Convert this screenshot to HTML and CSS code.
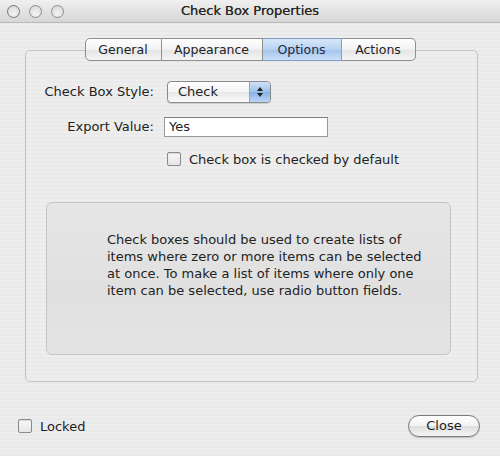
FILE: index.html
```html
<!DOCTYPE html>
<html>
<head>
<meta charset="utf-8">
<link rel="stylesheet" href="styles.css">
</head>
<body>
<div class="window">
  <div class="titlebar">
    <div class="lights">
      <span class="light"></span><span class="light"></span><span class="light"></span>
    </div>
    <div class="title">Check Box Properties</div>
  </div>
  <div class="content">
    <div class="tabbox">
      <div class="tabs">
        <div class="tab t-general">General</div>
        <div class="tab t-appearance">Appearance</div>
        <div class="tab t-options selected">Options</div>
        <div class="tab t-actions">Actions</div>
      </div>
      <div class="form">
        <div class="label">Check Box Style:</div>
        <div class="select">
          <span class="select-text">Check</span>
          <span class="select-arrows">
            <svg width="8" height="12" viewBox="0 0 8 12"><path d="M4 1 L7 5 L1 5 Z" fill="#222"/><path d="M4 11 L7 7 L1 7 Z" fill="#222"/></svg>
          </span>
        </div>
        <div class="label label2">Export Value:</div>
        <div class="input">Yes</div>
        <div></div>
        <div class="check-row"><span class="checkbox"></span><span>Check box is checked by default</span></div>
      </div>
      <div class="info">
        <p>Check boxes should be used to create lists of items where zero or more items can be selected at once. To make a list of items where only one item can be selected, use radio button fields.</p>
      </div>
    </div>
    <div class="bottom">
      <div class="check-row locked"><span class="checkbox"></span><span>Locked</span></div>
      <div class="button">Close</div>
    </div>
  </div>
</div>
</body>
</html>
```
FILE: styles.css
```css
html, body {
  margin: 0;
  padding: 0;
}
body {
  width: 500px;
  height: 456px;
  overflow: hidden;
  font-family: "DejaVu Sans", "Liberation Sans", sans-serif;
  font-size: 13px;
  color: #222;
  background: #ececec;
}
.window {
  width: 500px;
  height: 456px;
  background: repeating-linear-gradient(180deg, #ededed 0px, #ededed 2px, #e9e9e9 2px, #e9e9e9 4px);
  display: flex;
  flex-direction: column;
}
.titlebar {
  height: 22px;
  flex: none;
  background: linear-gradient(#f0f0f0, #d6d6d6);
  border-bottom: 1px solid #b9b9b9;
  display: flex;
  align-items: center;
  position: relative;
}
.lights {
  display: flex;
  gap: 9px;
  padding-left: 7px;
}
.light {
  width: 11px;
  height: 11px;
  border-radius: 50%;
  border: 1px solid #8d8d8d;
  background: radial-gradient(circle at 50% 70%, #f4f4f4, #d4d4d4);
  box-sizing: content-box;
}
.light:first-child {
  border-color: #777;
}
.title {
  position: absolute;
  left: 0;
  right: 0;
  top: 0;
  line-height: 22px;
  text-align: center;
  font-size: 13px;
  color: #2a2a2a;
  text-shadow: 0 0 0.4px #2a2a2a;
}
.content {
  flex: 1;
  padding: 27px 22px 0 25px;
  display: flex;
  flex-direction: column;
}
.tabbox {
  height: 330px;
  border: 1px solid #c2c2c2;
  border-radius: 5px;
  background: repeating-linear-gradient(180deg, #eeeeee 0px, #eeeeee 2px, #eaeaea 2px, #eaeaea 4px);
  display: flex;
  flex-direction: column;
}
.tabs {
  display: flex;
  justify-content: center;
  margin-top: -13px;
  margin-left: -3px;
}
.tab {
  height: 21px;
  line-height: 21px;
  text-align: center;
  border: 1px solid #8e8e8e;
  border-left: none;
  background: linear-gradient(#ffffff, #f2f2f2 50%, #e4e4e4 51%, #f4f4f4);
  color: #222;
  font-size: 12.5px;
}
.t-general {
  width: 75px;
  border-left: 1px solid #8e8e8e;
  border-radius: 5px 0 0 5px;
}
.t-appearance { width: 100px; }
.t-options { width: 78px; }
.t-actions {
  width: 73px;
  border-radius: 0 5px 5px 0;
}
.tab.selected {
  background: linear-gradient(#d8e7f8, #b7d2f2 50%, #a2c3ed 51%, #c9dff7);
  border-color: #7f9fc8;
  color: #1d2a44;
}
.form {
  display: grid;
  grid-template-columns: 128px auto;
  column-gap: 12px;
  align-items: center;
  margin-top: 20px;
}
.label {
  text-align: right;
  height: 22px;
  line-height: 22px;
}
.label2 {
  margin-top: 13px;
}
.select {
  width: 102px;
  height: 20px;
  margin-left: 1px;
  border: 1px solid #8a8a8a;
  border-radius: 4px;
  background: linear-gradient(#ffffff, #f4f4f4 50%, #e8e8e8 51%, #fafafa);
  display: flex;
  box-shadow: 0 1px 1px rgba(0,0,0,0.15);
  overflow: hidden;
}
.select-text {
  flex: 1;
  line-height: 20px;
  padding-left: 10px;
}
.select-arrows {
  width: 20px;
  border-left: 1px solid #8aa6cc;
  background: linear-gradient(#cfe1f7, #9cc0ec 50%, #86b1e8 51%, #bcd6f5);
  display: flex;
  align-items: center;
  justify-content: center;
}
.input {
  width: 158px;
  height: 18px;
  margin-top: 13px;
  margin-left: -2px;
  border: 1px solid #9a9a9a;
  border-top-color: #7c7c7c;
  background: #fff;
  line-height: 18px;
  padding-left: 4px;
}
.check-row {
  display: flex;
  align-items: center;
  gap: 8px;
  margin-top: 13px;
  height: 16px;
}
.form .check-row {
  margin-left: 1px;
}
.checkbox {
  width: 12px;
  height: 12px;
  border: 1px solid #8a8a8a;
  border-radius: 2px;
  background: linear-gradient(#f8f8f8, #e6e6e6);
  box-shadow: inset 0 1px 1px rgba(0,0,0,0.12);
  flex: none;
}
.info {
  margin: 35px 26px 0 20px;
  height: 151px;
  border: 1px solid #c4c4c4;
  border-radius: 6px;
  background: linear-gradient(#e6e6e6, #e0e0e0 60%, #e4e4e4);
  padding: 0 26px 0 60px;
}
.info p {
  margin: 28px 0 0 0;
  line-height: 17px;
  font-size: 13px;
  color: #222;
}
.bottom {
  display: flex;
  justify-content: space-between;
  align-items: center;
  margin-top: 33px;
  margin-left: -7px;
  margin-right: -2px;
}
.bottom .locked {
  margin-top: 0;
}
.button {
  width: 70px;
  height: 20px;
  line-height: 20px;
  text-align: center;
  border: 1px solid #7a7a7a;
  border-radius: 11px;
  background: linear-gradient(#ffffff, #f2f2f2 50%, #dedede 51%, #f4f4f4);
  box-shadow: 0 1px 1px rgba(0,0,0,0.2);
  color: #222;
}
```
